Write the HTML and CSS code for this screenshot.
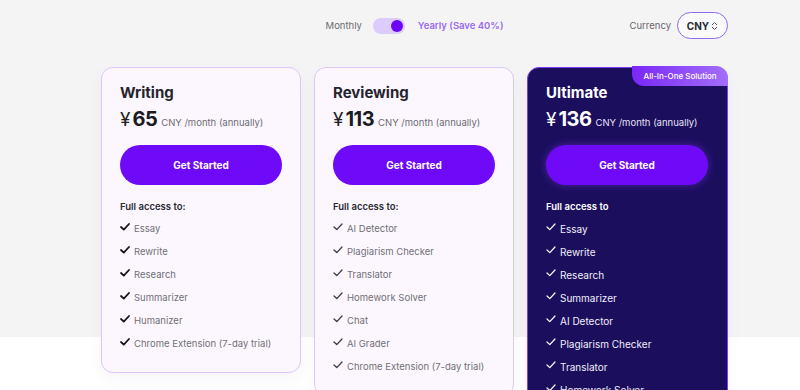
FILE: index.html
```html
<!DOCTYPE html>
<html lang="en">
<head>
<meta charset="utf-8">
<link rel="stylesheet" href="styles.css">
</head>
<body>
<div class="page">
  <header class="bar">
    <div class="spacer"></div>
    <div class="billing">
      <span class="opt">Monthly</span>
      <span class="switch"><span class="knob"></span></span>
      <span class="opt active">Yearly (Save 40%)</span>
    </div>
    <div class="currency">
      <span class="cur-label">Currency</span>
      <span class="select">CNY
        <svg class="updown" width="7" height="10" viewBox="0 0 7 10"><path d="M1 4 L3.5 1.5 L6 4 M1 6 L3.5 8.5 L6 6" fill="none" stroke="#555" stroke-width="1"/></svg>
      </span>
    </div>
  </header>

  <main class="plans">
    <section class="card">
      <h2 class="name">Writing</h2>
      <div class="price"><span class="yen">¥</span><span class="amt">65</span><span class="per">CNY /month (annually)</span></div>
      <button class="cta">Get Started</button>
      <p class="access">Full access to:</p>
      <ul class="feats">
        <li><svg class="chk" viewBox="0 0 10 8"><path d="M1 4 L3.8 6.6 L9 1"/></svg>Essay</li>
        <li><svg class="chk" viewBox="0 0 10 8"><path d="M1 4 L3.8 6.6 L9 1"/></svg>Rewrite</li>
        <li><svg class="chk" viewBox="0 0 10 8"><path d="M1 4 L3.8 6.6 L9 1"/></svg>Research</li>
        <li><svg class="chk" viewBox="0 0 10 8"><path d="M1 4 L3.8 6.6 L9 1"/></svg>Summarizer</li>
        <li><svg class="chk" viewBox="0 0 10 8"><path d="M1 4 L3.8 6.6 L9 1"/></svg>Humanizer</li>
        <li><svg class="chk" viewBox="0 0 10 8"><path d="M1 4 L3.8 6.6 L9 1"/></svg>Chrome Extension (7-day trial)</li>
      </ul>
    </section>

    <section class="card thin">
      <h2 class="name">Reviewing</h2>
      <div class="price"><span class="yen">¥</span><span class="amt">113</span><span class="per">CNY /month (annually)</span></div>
      <button class="cta">Get Started</button>
      <p class="access">Full access to:</p>
      <ul class="feats">
        <li><svg class="chk" viewBox="0 0 10 8"><path d="M1 4 L3.8 6.6 L9 1"/></svg>AI Detector</li>
        <li><svg class="chk" viewBox="0 0 10 8"><path d="M1 4 L3.8 6.6 L9 1"/></svg>Plagiarism Checker</li>
        <li><svg class="chk" viewBox="0 0 10 8"><path d="M1 4 L3.8 6.6 L9 1"/></svg>Translator</li>
        <li><svg class="chk" viewBox="0 0 10 8"><path d="M1 4 L3.8 6.6 L9 1"/></svg>Homework Solver</li>
        <li><svg class="chk" viewBox="0 0 10 8"><path d="M1 4 L3.8 6.6 L9 1"/></svg>Chat</li>
        <li><svg class="chk" viewBox="0 0 10 8"><path d="M1 4 L3.8 6.6 L9 1"/></svg>AI Grader</li>
        <li><svg class="chk" viewBox="0 0 10 8"><path d="M1 4 L3.8 6.6 L9 1"/></svg>Chrome Extension (7-day trial)</li>
      </ul>
    </section>

    <section class="card dark">
      <span class="badge">All-In-One Solution</span>
      <h2 class="name">Ultimate</h2>
      <div class="price"><span class="yen">¥</span><span class="amt">136</span><span class="per">CNY /month (annually)</span></div>
      <button class="cta glow">Get Started</button>
      <p class="access">Full access to</p>
      <ul class="feats">
        <li><svg class="chk" viewBox="0 0 10 8"><path d="M1 4 L3.8 6.6 L9 1"/></svg>Essay</li>
        <li><svg class="chk" viewBox="0 0 10 8"><path d="M1 4 L3.8 6.6 L9 1"/></svg>Rewrite</li>
        <li><svg class="chk" viewBox="0 0 10 8"><path d="M1 4 L3.8 6.6 L9 1"/></svg>Research</li>
        <li><svg class="chk" viewBox="0 0 10 8"><path d="M1 4 L3.8 6.6 L9 1"/></svg>Summarizer</li>
        <li><svg class="chk" viewBox="0 0 10 8"><path d="M1 4 L3.8 6.6 L9 1"/></svg>AI Detector</li>
        <li><svg class="chk" viewBox="0 0 10 8"><path d="M1 4 L3.8 6.6 L9 1"/></svg>Plagiarism Checker</li>
        <li><svg class="chk" viewBox="0 0 10 8"><path d="M1 4 L3.8 6.6 L9 1"/></svg>Translator</li>
        <li><svg class="chk" viewBox="0 0 10 8"><path d="M1 4 L3.8 6.6 L9 1"/></svg>Homework Solver</li>
        <li><svg class="chk" viewBox="0 0 10 8"><path d="M1 4 L3.8 6.6 L9 1"/></svg>Chat</li>
        <li><svg class="chk" viewBox="0 0 10 8"><path d="M1 4 L3.8 6.6 L9 1"/></svg>AI Grader</li>
      </ul>
    </section>
  </main>
</div>
</body>
</html>
```

FILE: styles.css
```css
* { box-sizing: border-box; }
html, body { margin: 0; padding: 0; }
body {
  width: 800px;
  height: 390px;
  overflow: hidden;
  font-family: "Inter", "Noto Sans", sans-serif;
  background: linear-gradient(#f4f4f5 0, #f4f4f5 337px, #ffffff 337px);
  color: #1f1f2b;
}
.page {
  width: 627px;
  margin-left: 101px;
}
.bar {
  height: 67px;
  padding-top: 12px;
  display: grid;
  grid-template-columns: 1fr auto 1fr;
  align-items: start;
}
.billing {
  display: flex;
  align-items: center;
  gap: 11px;
  height: 27px;
}
.opt {
  font-size: 9.5px;
  color: #6b6b70;
}
.opt.active {
  color: #9b6af2;
  font-weight: 600;
  margin-left: 2px;
}
.switch {
  width: 32px;
  height: 16px;
  border-radius: 8px;
  background: #dccbfd;
  display: flex;
  align-items: center;
  justify-content: flex-end;
  padding-right: 2px;
}
.knob {
  width: 12px;
  height: 12px;
  border-radius: 50%;
  background: #6c06f4;
}
.currency {
  justify-self: end;
  display: flex;
  align-items: center;
  gap: 6px;
}
.cur-label {
  font-size: 9.5px;
  color: #66666c;
}
.select {
  width: 51px;
  height: 27px;
  border: 1.5px solid #9168ee;
  border-radius: 14px;
  background: #fafafa;
  display: flex;
  align-items: center;
  justify-content: center;
  gap: 2px;
  font-size: 10px;
  font-weight: 700;
  color: #2a2a33;
}
.updown { display: block; margin-top: 1px; }

.plans {
  display: flex;
  align-items: flex-start;
  gap: 13px;
}
.card {
  position: relative;
  width: 200px;
  background: #fcf7fe;
  border: 1px solid #dac7f6;
  border-radius: 12px;
  padding: 15px 18px 17px 18px;
  box-shadow: 0 6px 14px rgba(120, 90, 170, 0.06);
}
.card.dark {
  width: 201px;
  background: #1b0e5d;
  border-color: #7a3ff2;
  color: #ffffff;
}
.name {
  margin: 0;
  font-size: 15px;
  line-height: 20px;
  font-weight: 700;
  color: #26252e;
}
.price {
  margin-top: 4px;
  display: flex;
  align-items: baseline;
  height: 26px;
}
.yen {
  font-size: 19px;
  font-weight: 400;
  color: #222;
  margin-right: 2px;
}
.amt {
  font-size: 20px;
  font-weight: 700;
  letter-spacing: -0.5px;
  color: #1b1b22;
}
.per {
  font-size: 9.5px;
  color: #6c6c74;
  margin-left: 4px;
}
.cta {
  display: block;
  margin-top: 12px;
  width: 162px;
  height: 40px;
  border: 0;
  border-radius: 20px;
  background: #6f0af8;
  color: #fff;
  font-family: inherit;
  font-size: 10px;
  font-weight: 700;
  cursor: pointer;
}
.cta.glow {
  box-shadow: 0 0 8px rgba(140, 60, 255, 0.45);
}
.access {
  margin: 15px 0 0;
  font-size: 9.5px;
  font-weight: 600;
  line-height: 14px;
  color: #2b2a35;
}
.feats {
  list-style: none;
  margin: 3px 0 0;
  padding: 0;
}
.feats li {
  display: flex;
  align-items: center;
  height: 23px;
  font-size: 9.5px;
  color: #707079;
}
.chk {
  width: 10px;
  height: 8px;
  margin-right: 4px;
  margin-top: -4px;
  fill: none;
  stroke: #15151c;
  stroke-width: 1.8;
  stroke-linecap: round;
  stroke-linejoin: round;
}
.thin .chk { stroke: #3a3a44; stroke-width: 1.3; }
.dark .name, .dark .yen, .dark .amt { color: #fff; }
.dark .per { color: #e6e3f5; }
.dark .access { color: #fff; }
.dark .feats li { color: #f1effa; font-size: 10px; }
.dark .chk { stroke: #ffffff; stroke-width: 1.2; }
.badge {
  position: absolute;
  top: -2px;
  right: -1px;
  width: 96px;
  height: 20px;
  border-radius: 0 12px 0 12px;
  background: linear-gradient(90deg, #7a27f7, #a26ff8);
  color: #fff;
  font-size: 8px;
  font-weight: 500;
  display: flex;
  align-items: center;
  justify-content: center;
}
```
